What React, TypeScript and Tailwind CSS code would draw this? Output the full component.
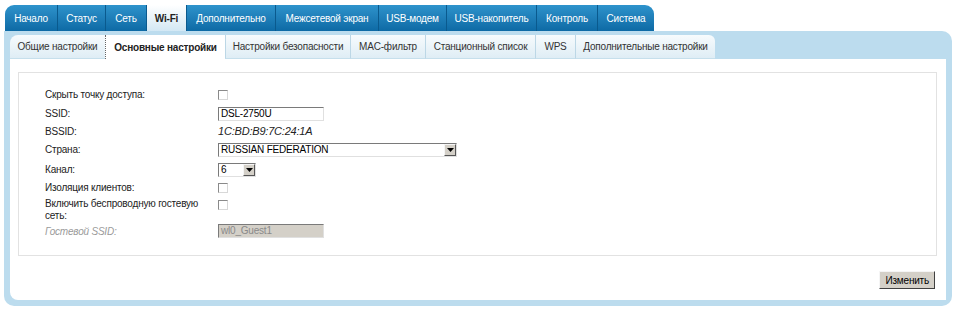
import React from "react";

const topTabs = [
  { label: "Начало", w: 52 },
  { label: "Статус", w: 48 },
  { label: "Сеть", w: 41 },
  { label: "Wi-Fi", w: 40, active: true },
  { label: "Дополнительно", w: 89 },
  { label: "Межсетевой экран", w: 103 },
  { label: "USB-модем", w: 68 },
  { label: "USB-накопитель", w: 90 },
  { label: "Контроль", w: 61 },
  { label: "Система", w: 57 },
];

const subTabs = [
  { label: "Общие настройки", w: 95 },
  { label: "Основные настройки", w: 120, active: true },
  { label: "Настройки безопасности", w: 125 },
  { label: "MAC-фильтр", w: 75 },
  { label: "Станционный список", w: 110 },
  { label: "WPS", w: 40 },
  { label: "Дополнительные настройки", w: 140 },
];

const font = "font-['Liberation_Sans',sans-serif]";

function Checkbox() {
  return <div className="w-[10px] h-[10px] border border-[#8a8a8a] border-r-[#d8d8d8] border-b-[#d8d8d8] bg-white" />;
}

function Select({ value, width }: { value: string; width: string }) {
  return (
    <div className={`flex h-[14px] ${width} border border-[#7a7a7a] border-r-[#e0e0e0] border-b-[#e0e0e0] bg-white`}>
      <div className="flex-1 pl-[2px] leading-[12px] text-black">{value}</div>
      <div className="w-[12px] h-[12px] bg-[#d4d0c8] border border-[#f5f5f5] border-r-[#555] border-b-[#555] flex items-center justify-center">
        <svg width="7" height="4" viewBox="0 0 7 4"><path d="M0 0h7L3.5 4z" fill="#000" /></svg>
      </div>
    </div>
  );
}

function Row({ label, h, children, italic }: { label: React.ReactNode; h: string; children?: React.ReactNode; italic?: boolean }) {
  return (
    <div className={`flex items-center ${h}`}>
      <div className={`w-[173px] shrink-0 ${italic ? "italic text-[#9a9a9a]" : "text-[#222]"}`}>{label}</div>
      <div className="flex items-center">{children}</div>
    </div>
  );
}

export default function App() {
  return (
    <div className={`w-[956px] h-[314px] bg-white pl-[4px] pt-[5px] text-[10px] tracking-[-0.2px] ${font}`}>
      {/* top menu */}
      <div className="flex ml-[1px] w-[649px] h-[26px] rounded-t-[9px] overflow-hidden bg-gradient-to-b from-[#2e93cc] to-[#0d6aa5]">
        {topTabs.map((t, i) => (
          <div
            key={t.label}
            style={{ width: t.w }}
            className={`flex items-center justify-center shrink-0 whitespace-nowrap ${i > 0 ? "border-l border-[#0a5a8e]" : ""} ${
              t.active ? "bg-gradient-to-b from-white to-[#d3e8f4] text-[#222] font-bold" : "text-white"
            }`}
          >
            {t.label}
          </div>
        ))}
      </div>

      {/* panel */}
      <div className="w-[948px] h-[275px] bg-[#bcdcee] rounded-tr-[10px] rounded-b-[10px] pl-[6px] pr-[6px] pt-[4px] pb-[6px]">
        <div className="h-full bg-white rounded-tl-[8px] rounded-bl-[8px] flex flex-col">
          {/* sub tabs */}
          <div className="flex h-[24px] bg-[#bcdcee]">
            <div className="flex rounded-tl-[8px] rounded-tr-[6px] overflow-hidden">
              {subTabs.map((t, i) => (
                <div
                  key={t.label}
                  style={{ width: t.w }}
                  className={`flex items-center justify-center shrink-0 whitespace-nowrap ${
                    t.active
                      ? "bg-white font-bold text-[#222] border-l border-dotted border-[#666]"
                      : `bg-gradient-to-b from-[#f7fbfd] to-[#dfedf5] text-[#333] border-b border-[#c6dfec] ${i > 0 ? "border-l border-l-[#bcd7e6]" : ""}`
                  }`}
                >
                  {t.label}
                </div>
              ))}
            </div>
          </div>

          {/* form box */}
          <div className="mt-[13px] ml-[8px] mr-[9px] border border-[#e2e2e2] pl-[26px] pt-[12px] pb-[16px]">
            <Row label="Скрыть точку доступа:" h="h-[19px]"><Checkbox /></Row>
            <Row label="SSID:" h="h-[19px]">
              <div className="w-[106px] h-[14px] border border-[#7a7a7a] border-r-[#e0e0e0] border-b-[#e0e0e0] pl-[2px] leading-[12px] text-black">DSL-2750U</div>
            </Row>
            <Row label="BSSID:" h="h-[16px]">
              <span className="italic text-[11px] text-[#222]">1C:BD:B9:7C:24:1A</span>
            </Row>
            <Row label="Страна:" h="h-[21px]"><Select value="RUSSIAN FEDERATION" width="w-[239px]" /></Row>
            <Row label="Канал:" h="h-[19px]"><Select value="6" width="w-[38px]" /></Row>
            <Row label="Изоляция клиентов:" h="h-[17px]"><Checkbox /></Row>
            <div className="flex items-start h-[27px] pt-[2px]">
              <div className="w-[160px] mr-[13px] leading-[12px] text-[#222]">Включить беспроводную гостевую сеть:</div>
              <div className="mt-[2px]"><Checkbox /></div>
            </div>
            <Row label="Гостевой SSID:" h="h-[16px]" italic>
              <div className="w-[106px] h-[14px] border border-[#7a7a7a] border-r-[#e0e0e0] border-b-[#e0e0e0] bg-[#d4d0c8] pl-[2px] leading-[12px] text-[#8a8a8a]">wl0_Guest1</div>
            </Row>
          </div>

          {/* submit */}
          <div className="flex justify-end mt-[15px] mr-[11px]">
            <div className="h-[18px] px-[5px] bg-[#d4d0c8] border border-[#f5f5f5] border-r-[#404040] border-b-[#404040] flex items-center text-black">Изменить</div>
          </div>
        </div>
      </div>
    </div>
  );
}
